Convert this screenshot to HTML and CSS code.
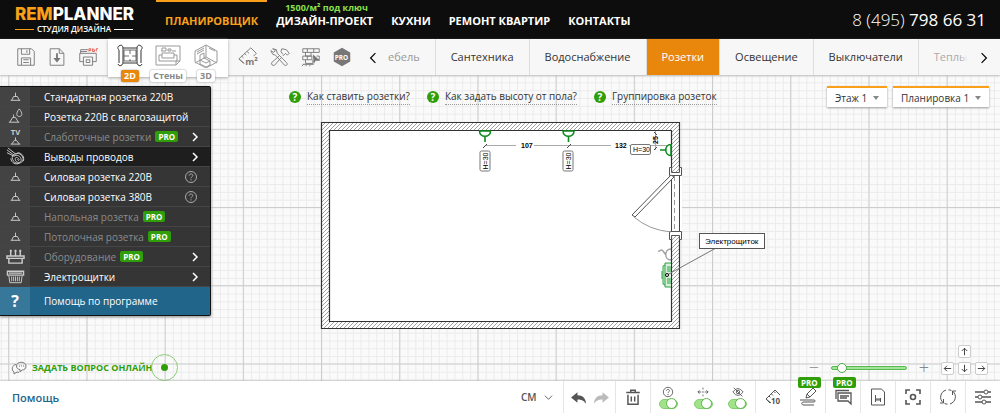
FILE: index.html
```html
<!DOCTYPE html>
<html lang="ru">
<head>
<meta charset="utf-8">
<title>Remplanner</title>
<link rel="stylesheet" href="styles.css">
</head>
<body>
<svg class="defs" aria-hidden="true">
  <symbol id="socket" viewBox="0 0 20 20"><path d="M10 6v4M6 14l2-4h4l2 4M5 14h10"/></symbol>
  <symbol id="right" viewBox="0 0 10 10"><path d="M3 1l4 4-4 4"/></symbol>
  <symbol id="help" viewBox="0 0 14 14"><circle cx="7" cy="7" r="5.5"/><path d="M5.2 5.7c0-2.3 3.6-2.3 3.6-.2 0 1.3-1.8 1.3-1.8 2.8M7 9.3v1.2"/></symbol>
  <symbol id="arrow" viewBox="0 0 12 12"><path d="M6 10V2.500M3 5.500l3-3 3 3"/></symbol>
</svg>

<header class="header">
  <a class="logo" href="#"><span class="logo-name"><b>REM</b>PLANNER</span><span class="logo-sub">СТУДИЯ ДИЗАЙНА</span></a>
  <nav class="nav">
    <a class="active" href="#">ПЛАНИРОВЩИК</a>
    <a href="#"><span class="promo">1500/м² под ключ</span>ДИЗАЙН-ПРОЕКТ</a>
    <a href="#">КУХНИ</a>
    <a href="#">РЕМОНТ КВАРТИР</a>
    <a href="#">КОНТАКТЫ</a>
  </nav>
  <a class="phone" href="tel:+74957986631"><span>8 (495)</span> 798 66 31</a>
</header>

<div class="toolbar">
  <div class="file-tools">
    <button aria-label="Сохранить"><svg viewBox="0 0 24 24"><path d="M3 3h15l3 3v15H3zM7 3v6h9V3M13 4.500v3M7 21v-8h10v8M9 15h6M9 18h6"/></svg></button>
    <button aria-label="Загрузить"><svg viewBox="0 0 24 24"><path d="M4.500 3h10l5 5v13h-15zM14.500 3v5h5"/><path class="fill" d="M11 8h2v5h3l-4 5-4-5h3z"/></svg></button>
    <button aria-label="Печать PDF"><svg viewBox="0 0 24 24"><path d="M12 4H4v4M3 8h18v9h-4M7 17H3V8M7 12h10v9H7zM4 6h7M10 15h4v3h-4z"/><path class="red" d="M13 6V3h2v2h-2M17 6V3l2 1v2zM21 6V3h2"/></svg></button>
  </div>
  <div class="views">
    <button class="current"><svg viewBox="0 0 28 24"><path d="M3 2c3-2 4 0 4 3v13c0 4-4 5-5 2M3 2c-2 1-1 3 0 4v13M25 2c-3-2-4 0-4 3v13c0 4 4 5 5 2M25 2c2 1 1 3 0 4v13M7 4h14M7 19h14"/><path stroke-width=".7" d="M8 6h12v11H8zM14 6v4M8 12h5M16 12h4M14 15v2"/></svg><span>2D</span></button>
    <button><svg viewBox="0 0 28 24"><path d="M2 2h24v15l-4 4H2zM22 21v-4h4M5 17v-6h3v3h12v-3h3v6zM8 11V9h12v2M7 7h5V4H8v3M14 7V5h3v2zM18 7h4"/></svg><span>Стены</span></button>
    <button><svg viewBox="0 0 28 24"><path d="M14 1l11 6v11l-11 6-11-6V7zM14 1v12L3 19M14 13l11 6M5 8l7-4M5 10l7-4M17 4l6 3M8 16v-5l4-2v5l6 3v4l-4 2-6-3zM8 16l6 3 4-2"/></svg><span>3D</span></button>
  </div>
  <div class="extra-tools">
    <button aria-label="Площадь"><svg viewBox="0 0 24 24"><path d="M7 19L1 14 14 2l6 6-3 3M4 11l2 2M7 8l2 2M10 6l2 2M1 14l5 5"/><text class="area" x="8" y="21">m²</text></svg></button>
    <button aria-label="Инструменты"><svg viewBox="0 0 24 24"><path d="M4 3l4 1 1 4 10 10c2 2 0 4-2 3L7 10 4 9 2 5l3 2 2-2zM14 3l5 1 3 4-2 2-2-2-3 3M13 13l-7 8c-2 1-4-1-3-3l8-7M14 3l-1 3 2 3"/></svg></button>
    <button aria-label="Стены"><svg viewBox="0 0 24 24"><path d="M3 3h18v4H3zM8 3v4M15 3v4M6 7v4h6V7M3 11h10v4H3zM8 11v4M6 15v4h8v-4M18 11h3v4h-2M3 20h12M4 20l-2 2M8 20l-2 2M12 20l-2 2"/><path class="fill" d="M14 9l8 7h-5l-2 4z"/></svg></button>
    <button aria-label="PRO"><svg viewBox="0 0 24 24"><path class="fill" d="M12 2l9 5v10l-9 5-9-5V7z"/><text class="light" x="4" y="15">PRO</text></svg></button>
  </div>
  <div class="tabs">
    <button class="step" aria-label="Назад"><svg viewBox="0 0 10 10"><path d="M7 1L3 5l4 4"/></svg></button>
    <button class="first">ебель</button>
    <button>Сантехника</button>
    <button>Водоснабжение</button>
    <button class="on">Розетки</button>
    <button>Освещение</button>
    <button>Выключатели</button>
    <button class="last">Теплы</button>
    <button class="step end" aria-label="Вперёд"><svg viewBox="0 0 10 10"><use href="#right"/></svg></button>
  </div>
</div>

<main class="workspace">
  <svg class="plan" aria-label="План помещения">
    <defs>
      <pattern id="minor" width="7.820" height="7.820" x="8.700" y="129.300" patternUnits="userSpaceOnUse"><path d="M0 .5h8M.5 0v8" stroke="#ebebeb"/></pattern>
      <pattern id="major" width="78.200" height="78.200" x="8.200" y="128.800" patternUnits="userSpaceOnUse"><path d="M0 .5h79M.5 0v79" stroke="#cdcdcd"/></pattern>
      <pattern id="hatch" width="4" height="4" patternUnits="userSpaceOnUse"><path d="M-1 1l2-2M0 4l4-4M3 5l2-2" stroke="#777" stroke-width=".7"/></pattern>
      <g id="wall-socket" fill="none" stroke="#0b8a1c" stroke-width="1.600"><path fill="#fff" d="M-5.500 0c0 7 11 7 11 0zM0 5v6"/></g>
      <g id="height"><rect x="-5" y="-10" width="10" height="20" rx="1.500" fill="#fff" stroke="#777"/><text class="mark" transform="rotate(-90)" text-anchor="middle" y="3">H=30</text></g>
    </defs>
    <g transform="translate(0 -75)">
      <rect y="75" width="100%" height="100%" fill="#fafafa"/>
      <rect y="75" width="100%" height="100%" fill="url(#minor)"/>
      <rect y="75" width="100%" height="100%" fill="url(#major)"/>
      <rect x="321" y="122" width="359" height="207" fill="#fff"/>
      <path d="M321.500 122.500h358v206h-358zM329.500 130.500v191h342v-191z" fill="url(#hatch)" fill-rule="evenodd" stroke="#333" stroke-width="1.200"/>
      <rect x="670" y="172" width="12" height="63" fill="#fff"/>
      <path d="M671.500 176v55M679.500 176v55" stroke="#444"/>
      <path d="M674.500 176v55" stroke="#999" stroke-dasharray="5 3"/>
      <g fill="#fff" stroke="#555"><path d="M669.500 167.500h2v5h8v-5h2v8h-12zM669.500 231.500h12v8h-2v-4h-8v4h-2z"/></g>
      <path d="M632 215l39-40 3 2-39 40z" fill="#fff" stroke="#555"/>
      <path d="M634 217q15 13 37 15" fill="none" stroke="#999"/>
      <path d="M485 145.500h31M534 145.500h77M629 145.500h43M655.500 131v19" stroke="#aaa"/>
      <path d="M483 148l4-4M567 148l4-4M654 132l3 3M654 150l3-3" stroke="#444"/>
      <use href="#wall-socket" x="485" y="131"/><use href="#wall-socket" x="568.500" y="131"/>
      <use href="#wall-socket" transform="translate(671 150) rotate(90)"/>
      <use href="#height" x="485" y="161"/><use href="#height" x="568" y="161"/>
      <rect x="630.500" y="144.500" width="20" height="10" rx="1.500" fill="#fff" stroke="#777"/><text class="mark" x="633" y="152">H=30</text>
      <text class="size" x="521" y="148">107</text><text class="size" x="615" y="148">132</text>
      <text class="size" transform="translate(658 144) rotate(-90)">25</text>
      <path d="M671 249c-7 0-7 11 0 11M666 255l-3-4c-2-3-2 1-5 0" fill="none" stroke="#999" stroke-width="1.300"/>
      <path d="M671 263h-6v24h6M665 265l-2 1v18l2 1M662 271v8M667 267h4M667 269h4M667 271h4M667 279h4M667 281h4M667 283h4" fill="#d7efdb" stroke="#2aa341"/>
      <path d="M667 275l49-27" stroke="#777"/>
      <circle cx="667" cy="275" r="1.500" fill="#fff" stroke="#000"/>
      <rect x="699.500" y="233.500" width="65" height="15" fill="#fff" stroke="#555"/>
      <text class="note" x="705" y="244">Электрощиток</text>
    </g>
  </svg>

  <div class="top">
    <ul class="menu">
      <li><button><i><svg><use href="#socket"/></svg></i><span>Стандартная розетка 220В</span></button></li>
      <li><button><i><svg viewBox="0 0 20 20"><path d="M8 8v3M4 16l3-5h3l3 5M3 16h11M14 2c-4 5-3 8 0 8s4-3 0-8"/></svg></i><span>Розетка 220В с влагозащитой</span></button></li>
      <li class="dim"><button><i><svg viewBox="0 0 20 20"><path d="M10 11v3M6 18l3-4h2l3 4M5 18h10"/><text x="5" y="8">TV</text></svg></i><span>Слаботочные розетки</span><b class="pro">PRO</b><svg class="go"><use href="#right"/></svg></button></li>
      <li class="hover"><button><i><svg viewBox="0 0 20 20"><path d="M1 3l8 6M2 1l9 7M1 6l8 4M8 8c5-3 9 0 10 4 1 5-7 7-10 3-2-3-2-5 0-7zM9 9c5-1 7 2 7 5s-5 3-6 0 1-4 3-2 0 3-1 1M5 12c1 5 5 7 9 5M12 6c5 0 8 5 6 9"/></svg></i><span>Выводы проводов</span><svg class="go"><use href="#right"/></svg></button></li>
      <li><button><i><svg><use href="#socket"/></svg></i><span>Силовая розетка 220В</span><svg class="info"><use href="#help"/></svg></button></li>
      <li><button><i><svg><use href="#socket"/></svg></i><span>Силовая розетка 380В</span><svg class="info"><use href="#help"/></svg></button></li>
      <li class="dim"><button><i><svg><use href="#socket"/></svg></i><span>Напольная розетка</span><b class="pro">PRO</b></button></li>
      <li class="dim"><button><i><svg><use href="#socket"/></svg></i><span>Потолочная розетка</span><b class="pro">PRO</b></button></li>
      <li class="dim"><button><i><svg viewBox="0 0 20 20"><path stroke-width="1.500" d="M1 9.500h18v2.500H1zM3 12v5h14v-5M5 9V4M10 9V4M15 9V4"/><path stroke-width="2" d="M4 4h2M9 4h2M14 4h2"/></svg></i><span>Оборудование</span><b class="pro">PRO</b><svg class="go"><use href="#right"/></svg></button></li>
      <li><button><i><svg viewBox="0 0 20 20"><path d="M1.500 4.500h17v4h-17zM3 6.500h14" stroke-width="1.400"/><path d="M3 9l1 7.500h12L17 9M6 10v5M8 10v5M10 10v5M12 10v5M14 10v5"/></svg></i><span>Электрощитки</span><svg class="go"><use href="#right"/></svg></button></li>
      <li class="about"><button><i>?</i><span>Помощь по программе</span></button></li>
    </ul>
    <div class="hints">
      <a href="#"><i>?</i><span>Как ставить розетки?</span></a>
      <a href="#"><i>?</i><span>Как задать высоту от пола?</span></a>
      <a href="#"><i>?</i><span>Группировка розеток</span></a>
    </div>
    <div class="selects">
      <label class="pick floor"><select aria-label="Этаж"><option>Этаж 1</option></select></label>
      <label class="pick layout"><select aria-label="Планировка"><option>Планировка 1</option></select></label>
    </div>
  </div>

  <div class="bottom">
    <a class="chat" href="#"><svg viewBox="0 0 16 16"><path d="M5.500 6C5.500 1 15 1 15 6c0 3-2 4-4 4l-2 2V9.500C7 9.500 5.500 8 5.500 6zM5 4.500C1 5 0 10 3 12v2l3-2 2 .5M8 6h1M10 6h1M12 6h1"/></svg><span>ЗАДАТЬ ВОПРОС ОНЛАЙН</span><i></i></a>
    <div class="zoom">
      <button aria-label="Уменьшить">−</button>
      <input type="range" min="0" max="100" value="8" aria-label="Масштаб">
      <button aria-label="Увеличить">+</button>
      <div class="pad">
        <button class="up" aria-label="Вверх"><svg><use href="#arrow"/></svg></button>
        <button class="left" aria-label="Влево"><svg><use href="#arrow"/></svg></button>
        <button class="down" aria-label="Вниз"><svg><use href="#arrow"/></svg></button>
        <button class="right" aria-label="Вправо"><svg><use href="#arrow"/></svg></button>
      </div>
    </div>
  </div>
</main>

<footer class="footer">
  <a class="help-link" href="#">Помощь</a>
  <label class="unit"><select aria-label="Единицы"><option>СМ</option></select><svg viewBox="0 0 10 10"><path d="M1 3l4 4 4-4"/></svg></label>
  <div class="cell history">
    <button aria-label="Отменить"><svg viewBox="0 0 16 16"><path class="fill" d="M7 2L1 7l6 5V9c4 0 6 1 8 4 0-5-3-8-8-8z"/></svg></button>
    <button class="off" aria-label="Повторить"><svg viewBox="0 0 16 16"><path class="fill" d="M9 2l6 5-6 5V9c-4 0-6 1-8 4 0-5 3-8 8-8z"/></svg></button>
  </div>
  <button class="cell" aria-label="Удалить"><svg viewBox="0 0 16 16"><path stroke-width="1.300" d="M2 4h12M6 4V2h4v2M3.500 6v8.500h9V6M6.500 7.500v4.500M9.500 7.500v4.500"/></svg></button>
  <div class="cell switches">
    <label><svg viewBox="0 0 14 14"><use href="#help"/></svg><input type="checkbox" checked aria-label="Подсказки"></label>
    <label><svg viewBox="0 0 14 14"><path d="M7 2v2M7 6v2M7 10v2M5 7H1M3 5L1 7l2 2M9 7h4M11 5l2 2-2 2"/></svg><input type="checkbox" checked aria-label="Размеры"></label>
    <label><svg viewBox="0 0 14 14"><path d="M1 7q6-8 12 0-6 8-12 0zM9 7a2 2 0 1 0-4 0 2 2 0 0 0 4 0M2 2l10 10"/></svg><input type="checkbox" checked aria-label="Скрыть"></label>
  </div>
  <button class="cell" aria-label="Шаг 10"><svg viewBox="0 0 18 18"><path d="M6 15l-4-4 9-9 5 5M5 8l1.500 1.500M7.500 6L9 7.500M10 3.500L11.500 5M2 11l5 4"/><text x="7" y="16">10</text></svg></button>
  <button class="cell" aria-label="Рисование"><b class="pro">PRO</b><svg viewBox="0 0 18 18"><path d="M7 10l1-4 6-6 3 3-6 6zM8 6l3 3M1 12h13c3 0 3 2 0 2H5c-3 0-3 3 0 3h10"/></svg></button>
  <button class="cell" aria-label="Комментарии"><b class="pro">PRO</b><svg viewBox="0 0 18 18"><path stroke-width="1.300" d="M4 5h13v11l-3-3H4zM6 8h9M6 10h7M2 11V2.500h13"/></svg></button>
  <button class="cell" aria-label="Мебель"><svg viewBox="0 0 18 18"><path d="M2.500 1h10l3 3v13h-13z"/><path d="M6.500 7v7M6 11h6M11.500 10v4M6 12h6"/></svg></button>
  <button class="cell" aria-label="По центру"><svg viewBox="0 0 18 18"><path stroke-width="1.600" d="M2 6V2h4M12 2h4v4M16 12v4h-4M6 16H2v-4"/><circle cx="9" cy="9" r="2.500" stroke-width="1.600"/></svg></button>
  <button class="cell" aria-label="Повернуть"><svg viewBox="0 0 18 18"><path d="M7 2C1 4 0 11 4 14.500M4.500 11v4H1M11 16c6-2 7-9 3-12.500M13.500 7V3H17M9.500 1.800c1 0 2 .3 3 .8M8.500 16.200c-1 0-2-.3-3-.8"/></svg></button>
  <button class="cell" aria-label="Настройки"><svg viewBox="0 0 18 18"><path stroke-width="1.300" d="M1 4h9M14 4h3M1 9h3M8 9h9M1 14h7M12 14h5"/><circle cx="12" cy="4" r="2"/><circle cx="6" cy="9" r="2"/><circle cx="10" cy="14" r="2"/></svg></button>
</footer>
</body>
</html>
```
FILE: styles.css
```css
* { box-sizing: border-box; }
body {
  margin: 0;
  min-height: 100vh;
  display: flex;
  flex-direction: column;
  font: 10px/16px "Open Sans", "Noto Sans", sans-serif;
  color: #333;
  overflow-x: hidden;
}
.defs { display: none; }
button, select, input { font: inherit; color: inherit; }
button { margin: 0; padding: 0; border: 0; background: none; }
a { color: inherit; text-decoration: none; }
i { font-style: normal; }
svg { fill: none; stroke: currentColor; flex: none; }
svg text { fill: currentColor; stroke: none; font-weight: 700; font-size: 8px; }
.fill { fill: currentColor; stroke: none; }
.red { stroke: #e2574c; }

.header {
  height: 39px;
  display: flex;
  align-items: center;
  background: #0d0d0d;
  color: #fff;
}
.logo { width: 156px; padding-left: 15px; }
.logo-name { display: block; font: 800 17px/19px Inter, sans-serif; }
.logo-name b { font-weight: 800; color: #f9a01b; }
.logo-sub {
  width: 118px;
  display: flex;
  align-items: center;
  gap: 3px;
  font-size: 8px;
  line-height: 10px;
  font-weight: 600;
  white-space: nowrap;
}
.logo-sub::before, .logo-sub::after { content: ""; flex: 1; height: 1px; background: #fff; }
.logo-sub::before { background: #f9a01b; }
.nav { align-self: stretch; display: flex; font-size: 11px; font-weight: 700; line-height: 38px; white-space: nowrap; }
.nav a { position: relative; padding: 2px 9px 0; }
.nav .active { color: #f9a01b; box-shadow: inset 0 2px #f9a01b; }
.promo { position: absolute; left: 18px; top: 2px; font-size: 9px; line-height: 12px; color: #8be04e; }
.phone { margin-left: auto; padding-right: 14px; font-size: 17px; }
.phone span { font-weight: 300; }

.toolbar {
  position: relative;
  z-index: 2;
  height: 36px;
  display: flex;
  background: #f7f7f7;
  box-shadow: 0 1px 2px #bbb;
  color: #777;
}
.file-tools { width: 108px; padding-left: 10px; display: flex; }
.file-tools button, .extra-tools button { width: 31px; display: grid; place-items: center; }
.file-tools svg, .extra-tools svg { width: 22px; height: 22px; }
svg .light { fill: #fff; font-size: 7px; }
svg .area { font-size: 10px; }
.views { width: 120px; height: 38px; display: flex; justify-content: center; background: #fff; box-shadow: 0 1px 3px #aaa; }
.views button { width: 38px; display: flex; flex-direction: column; align-items: center; gap: 2px; padding-top: 5px; height: 44px; color: #999; }
.views .current { color: #333; }
.views svg { width: 28px; height: 24px; }
.views span {
  padding: 0 3px;
  border-radius: 2px;
  background: #fff;
  box-shadow: 0 0 2px #888;
  color: #888;
  font-size: 9px;
  line-height: 12px;
  font-weight: 700;
}
.views .current span { background: #e8870b; color: #fff; }
.extra-tools { display: flex; padding-left: 5px; }
.tabs { flex: 1; min-width: 0; display: flex; overflow: hidden; position: relative; color: #333; font-size: 11px; }
.tabs button { flex: none; padding: 0 15px; border-right: 1px solid #ddd; white-space: nowrap; }
.tabs .on { background: #e8870b; color: #fff; }
.tabs .first { padding-left: 0; color: #999; }
.tabs .last { color: #aaa; border: 0; }
.tabs .step { width: 31px; border: 0; padding: 0; color: #000; }
.tabs .end { position: absolute; right: 0; top: 0; height: 36px; width: 33px; background: #f7f7f7; box-shadow: -3px 0 5px #f7f7f7; }
.step svg { width: 12px; height: 12px; vertical-align: middle; }

.workspace { position: relative; flex: 1; display: flex; flex-direction: column; justify-content: space-between; }
.plan { position: absolute; inset: 0; width: 100%; height: 100%; stroke: none; }
svg .mark, svg .size, svg .note { font: 400 7px "Liberation Sans", sans-serif; fill: #000; }
svg .size { font-weight: 700; }
svg .note { font-size: 8px; }
.top { position: relative; display: flex; align-items: flex-start; padding-top: 11px; }

.menu {
  width: 211px;
  margin: 0;
  padding: 0;
  list-style: none;
  border: solid #111;
  border-width: 1px 1px 1px 0;
  border-radius: 0 2px 2px 0;
  background: #353535;
  color: #fff;
  box-shadow: 0 1px 3px #888;
}
.menu button { width: 100%; height: 20px; display: flex; align-items: center; padding-right: 8px; border-bottom: 1px solid #454545; text-align: left; white-space: nowrap; }
.menu i { align-self: stretch; width: 30px; margin-right: 14px; display: grid; place-items: center; background: #434343; color: #ccc; }
.menu i svg { width: 19px; height: 19px; }
.menu .dim span { color: #8b8b8b; }
.menu .hover, .menu .hover i { background: #1e1e1e; }
.pro { margin-left: 4px; padding: 0 3px; border-radius: 2px; background: #2f9e08; color: #fff; font-size: 8px; line-height: 11px; }
.go, .info { margin-left: auto; width: 14px; height: 14px; }
.go { height: 10px; stroke-width: 1.5; }
.info { margin-right: 4px; color: #aaa; }
.menu .about { background: #22658a; }
.menu .about button { height: 28px; border: 0; }
.menu .about i { background: #37779a; color: #fff; font-size: 16px; font-weight: 700; }

.hints { display: flex; gap: 17px; padding: 3px 0 0 78px; white-space: nowrap; }
.hints a { display: flex; gap: 6px; align-items: center; }
.hints i { width: 12px; border-radius: 50%; background: #2f9e08; color: #fff; line-height: 12px; font-weight: 700; text-align: center; }
.hints span { border-bottom: 1px dotted #999; line-height: 15px; }
.selects { margin-left: auto; padding-right: 11px; display: flex; gap: 6px; }
.pick { position: relative; background: #fff; border-top: 2px solid #f9a01b; box-shadow: 0 1px 2px #999; }
.pick select, .unit select { appearance: none; border: 0; background: none; }
.pick select { width: 100%; height: 19px; padding: 0 0 0 8px; }
.floor { width: 60px; }
.layout { width: 96px; }
.pick::after { content: ""; position: absolute; right: 8px; top: 8px; border: solid transparent; border-width: 4px 3px 0; border-top-color: #888; }

.bottom { position: relative; display: flex; justify-content: space-between; align-items: flex-end; }
.chat { display: flex; align-items: center; padding-left: 11px; color: #2f9e08; font-size: 9px; font-weight: 700; }
.chat svg { width: 16px; height: 16px; margin-right: 5px; color: #777; }
.chat i { width: 27px; height: 27px; margin-left: -2px; display: grid; place-items: center; border: 1px solid #8ecb79; border-radius: 50%; }
.chat i::after { content: ""; width: 7px; height: 7px; border-radius: 50%; background: #2f9e08; }
.zoom { display: flex; align-items: flex-end; gap: 12px; padding: 0 12px 6px 0; color: #888; }
.zoom > button { font-size: 18px; line-height: 16px; width: 10px; display: flex; justify-content: center; font-weight: 300; }
.zoom input { appearance: none; width: 76px; height: 4px; margin: 5px 0; border: 1px solid #55bb4c; border-radius: 3px; background: #a5e39c; }
.zoom input::-webkit-slider-thumb { appearance: none; width: 10px; height: 10px; border: 1px solid #4aa944; border-radius: 50%; background: #fff; }
.pad { display: grid; grid-template: "a up b" 13px "left down right" 13px / 13px 13px 13px; gap: 4px; }
.pad button { display: grid; place-items: center; border: 1px solid #ccc; border-radius: 2px; background: #fff; color: #333; }
.pad svg { width: 11px; height: 11px; }
.up { grid-area: up; }
.left { grid-area: left; }
.down { grid-area: down; }
.right { grid-area: right; }
.left svg { rotate: -90deg; }
.down svg { rotate: 180deg; }
.right svg { rotate: 90deg; }

.footer { position: relative; height: 32px; display: flex; background: #fff; box-shadow: 0 0 2px #999; color: #555; }
.help-link { margin-right: auto; padding-left: 12px; color: #22658a; font-size: 11px; font-weight: 600; line-height: 34px; }
.unit { display: flex; align-items: center; gap: 7px; padding-right: 10px; font-weight: 600; }
.unit select { padding: 0; }
.unit svg { width: 9px; height: 9px; }
.cell { position: relative; width: 35px; border-left: 1px solid #e5e5e5; display: grid; place-items: center; }
.cell svg { width: 18px; height: 18px; }
.history { width: 52px; display: flex; align-items: center; justify-content: center; gap: 6px; padding-top: 2px; }
.history button { display: grid; }
.history svg { width: 17px; height: 17px; }
.off { color: #bbb; }
.switches { width: 105px; display: flex; }
.switches label { flex: 1; display: grid; justify-items: center; gap: 1px; }
.switches svg { width: 12px; height: 12px; }
.switches input {
  appearance: none;
  display: flex;
  justify-content: flex-end;
  align-items: center;
  width: 19px;
  height: 10px;
  margin: 0;
  border-radius: 5px;
  border: 1px solid #86cf70;
  background: #a0e38a;
}
.switches input::before { content: ""; width: 9px; height: 9px; border: 1px solid #5fb54a; border-radius: 50%; background: #fff; }
.switches input:not(:checked) { justify-content: flex-start; background: #ddd; }
.cell .pro { position: absolute; top: -4px; left: 7px; margin: 0; }
```
